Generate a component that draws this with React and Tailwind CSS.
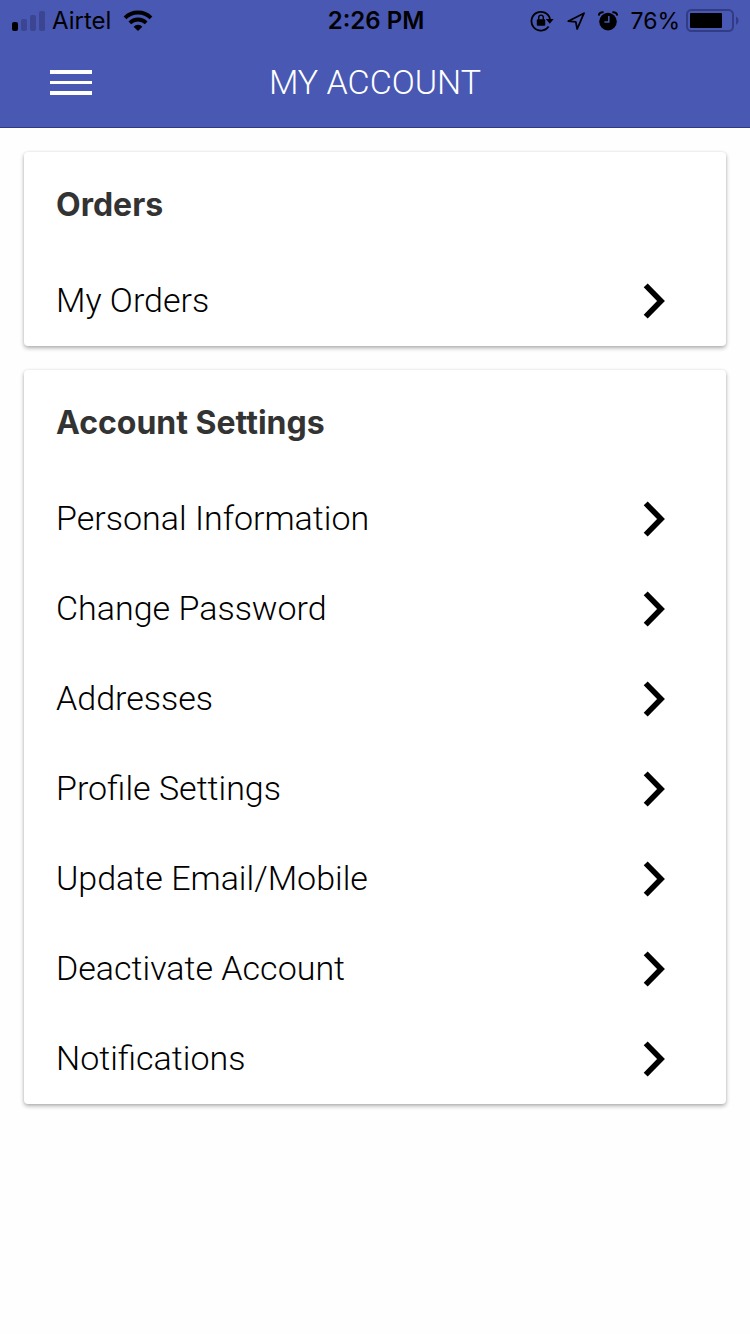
const sections = [
  { title: 'Orders', items: ['My Orders'] },
  {
    title: 'Account Settings',
    items: [
      'Personal Information',
      'Change Password',
      'Addresses',
      'Profile Settings',
      'Update Email/Mobile',
      'Deactivate Account',
      'Notifications',
    ],
  },
];

function SignalIcon() {
  return (
    <svg width="34" height="22" viewBox="0 0 34 22" aria-hidden="true">
      <rect x="0" y="12" width="6" height="9" rx="2" fill="#000" />
      <g fill="#3b4591">
        <rect x="9" y="9" width="6" height="12" rx="2" />
        <rect x="18" y="5" width="6" height="16" rx="2" />
        <rect x="27" y="1" width="6" height="20" rx="2" />
      </g>
    </svg>
  );
}

function WifiIcon() {
  return (
    <svg width="30" height="22" viewBox="0 0 30 22" fill="none" stroke="#000" strokeWidth="3.8" aria-hidden="true">
      <path d="M2 7.9A18.4 18.4 0 0 1 28 7.9" />
      <path d="M6.8 12.9A11.6 11.6 0 0 1 23.2 12.9" />
      <path d="M10.6 16.7a6.2 6.2 0 0 1 8.8 0L15 21z" fill="#000" stroke="none" />
    </svg>
  );
}

function RotationLockIcon() {
  return (
    <svg width="24" height="22" viewBox="0 0 24 22" aria-hidden="true">
      <path d="M18.6 16.6A9.4 9.4 0 1 1 20 9" fill="none" stroke="#000" strokeWidth="1.8" />
      <path d="M15.8 9h7.8l-3.8 4.8z" fill="#000" />
      <rect x="6.8" y="9.2" width="8.4" height="6.6" rx="0.8" fill="#000" />
      <path d="M8.7 10V7.4a2.3 2.3 0 0 1 4.6 0V10" fill="none" stroke="#000" strokeWidth="1.4" />
    </svg>
  );
}

function LocationIcon() {
  return (
    <svg width="20" height="20" viewBox="0 0 20 20" aria-hidden="true">
      <path d="M18 2.2L2.2 10.2l7.6 0.6 1.4 7.2z" fill="none" stroke="#000" strokeWidth="1.8" strokeLinejoin="round" />
    </svg>
  );
}

function AlarmIcon() {
  return (
    <svg width="20" height="22" viewBox="0 0 20 22" aria-hidden="true">
      <circle cx="10" cy="11.6" r="8.8" fill="#000" />
      <path d="M0.7 5.6C1 3.2 3 1.8 5.6 2.2M19.3 5.6C19 3.2 17 1.8 14.4 2.2" fill="none" stroke="#000" strokeWidth="2" />
      <path d="M10.8 6v5.9H6.4" fill="none" stroke="#4858b3" strokeWidth="1.5" />
    </svg>
  );
}

function BatteryIcon() {
  return (
    <svg width="54" height="24" viewBox="0 0 54 24" aria-hidden="true">
      <rect x="1" y="1" width="46" height="21" rx="4.5" fill="none" stroke="#323c84" strokeWidth="2" />
      <rect x="4" y="4" width="32" height="15" rx="1" fill="#000" />
      <path d="M50 7.6c3.4 1.4 3.4 6.8 0 8.2z" fill="#323c84" />
    </svg>
  );
}

function ChevronIcon() {
  return (
    <svg width="24" height="36" viewBox="0 0 24 36" fill="none" stroke="#000" strokeWidth="5.6" aria-hidden="true">
      <path d="M2.7 2.4L18 18 2.7 33.6" />
    </svg>
  );
}

function StatusBar() {
  return (
    <div className="grid h-10 grid-cols-[1fr_auto_1fr] items-center pl-3 pr-[10px] pt-px text-black">
      <div className="flex items-center">
        <SignalIcon />
        <span className="ml-[6px] mr-3 text-[24px] leading-7">Airtel</span>
        <WifiIcon />
      </div>
      <span className="text-[24px] font-semibold leading-7">2:26 PM</span>
      <div className="flex items-center justify-end">
        <RotationLockIcon />
        <span className="mx-3"><LocationIcon /></span>
        <AlarmIcon />
        <span className="ml-3 mr-[6px] text-[23px] leading-7">76%</span>
        <BatteryIcon />
      </div>
    </div>
  );
}

export default function App() {
  return (
    <div className="min-h-screen bg-[#fefefe] font-['Inter','Liberation_Sans',sans-serif]">
      <header className="border-b border-[#2f3b82] bg-[#4858b3]">
        <StatusBar />
        <div className="grid h-[87px] grid-cols-[1fr_auto_1fr] items-center px-[50px] pb-[3px]">
          <button type="button" aria-label="Open menu" className="flex w-[42px] flex-col gap-[7px]">
            <span className="h-1 w-full bg-white" />
            <span className="h-[3px] w-full bg-white" />
            <span className="h-1 w-full bg-white" />
          </button>
          <h1 className="font-['Roboto','Liberation_Sans',sans-serif] text-[34px] font-light leading-10 text-white">
            MY ACCOUNT
          </h1>
        </div>
      </header>
      <main className="flex flex-col gap-6 p-6">
        {sections.map((section) => (
          <section
            key={section.title}
            className="rounded bg-white shadow-[0_2px_4px_rgba(0,0,0,0.32),0_0_2px_rgba(0,0,0,0.08)]"
          >
            <h2 className="flex h-[104px] items-center px-8 pt-[2px] text-[32px] font-bold leading-10 text-[#333333]">
              {section.title}
            </h2>
            <ul>
              {section.items.map((item) => (
                <li key={item}>
                  <a
                    href="#"
                    className="flex h-[90px] items-center justify-between pl-8 pr-[59px] font-['Roboto','Liberation_Sans',sans-serif] text-[34px] font-light leading-10 text-black"
                  >
                    <span className="pb-[2px]">{item}</span>
                    <ChevronIcon />
                  </a>
                </li>
              ))}
            </ul>
          </section>
        ))}
      </main>
    </div>
  );
}
